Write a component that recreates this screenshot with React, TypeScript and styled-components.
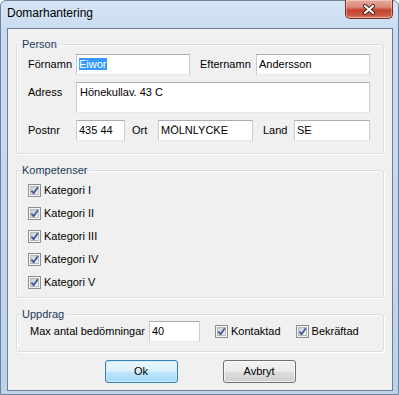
import type { FC, ReactNode } from 'react';
import styled, { createGlobalStyle } from 'styled-components';

const GlobalStyle = createGlobalStyle`
  html, body {
    margin: 0;
    padding: 0;
    background: #ffffff;
  }
  body {
    font-family: "Liberation Sans", Arial, sans-serif;
    font-size: 11px;
    color: #000;
  }
`;

const Window = styled.div`
  width: 399px;
  height: 395px;
  box-sizing: border-box;
  display: flex;
  flex-direction: column;
  padding: 0 5px 3px 6px;
  border: 1px solid #71839a;
  border-radius: 6px 6px 0 0;
  background: linear-gradient(180deg, #d7e6f6 0%, #c9dcf1 28px, #bdd3ec 100%);
`;

const TitleBar = styled.div`
  display: flex;
  align-items: flex-start;
  height: 27px;
  flex: none;
`;

const Title = styled.span`
  padding-top: 5px;
  font-size: 12px;
  line-height: 15px;
  color: #000;
`;

const CloseButton = styled.div`
  margin-left: auto;
  margin-top: -1px;
  width: 48px;
  height: 19px;
  box-sizing: border-box;
  display: flex;
  align-items: center;
  justify-content: center;
  border: 1px solid #7a2f25;
  border-top: none;
  border-radius: 0 0 5px 5px;
  background: linear-gradient(180deg, #e8a99c 0%, #d88a7a 40%, #c4432f 55%, #c95742 85%, #dc8a73 100%);
  box-shadow: inset 0 0 0 1px rgba(255, 255, 255, 0.35);
`;

const Client = styled.div`
  flex: 1;
  display: flex;
  flex-direction: column;
  padding: 15px 8px 0;
  border: 1px solid #6f7f90;
  background: #f0f0f0;
`;

const GroupBox = styled.div<{ $mt?: number }>`
  display: flex;
  flex-direction: column;
  margin-top: ${({ $mt }) => $mt ?? 0}px;
  border: 1px solid #d5dfe5;
  border-radius: 3px;
  box-shadow: inset 1px 1px 0 #ffffff, 1px 1px 0 #ffffff;
`;

const Caption = styled.span<{ $mb?: number }>`
  align-self: flex-start;
  margin: -8px 0 ${({ $mb }) => $mb ?? 0}px 3px;
  padding: 0 2px;
  line-height: 15px;
  background: #f0f0f0;
  color: #1e395b;
`;

const GroupBody = styled.div<{ $pad: string; $gap?: number }>`
  display: flex;
  flex-direction: column;
  gap: ${({ $gap }) => $gap ?? 0}px;
  padding: ${({ $pad }) => $pad};
`;

const FieldRow = styled.div<{ $top?: boolean }>`
  display: flex;
  align-items: ${({ $top }) => ($top ? 'flex-start' : 'center')};
`;

const FieldLabel = styled.span<{ $w: number; $pl?: number; $pt?: number }>`
  flex: none;
  box-sizing: border-box;
  width: ${({ $w }) => $w}px;
  padding-left: ${({ $pl }) => $pl ?? 0}px;
  padding-top: ${({ $pt }) => $pt ?? 0}px;
  line-height: 15px;
  white-space: nowrap;
`;

const TextBox = styled.div<{ $w?: number; $h?: number }>`
  box-sizing: border-box;
  ${({ $w }) => ($w ? `width: ${$w}px; flex: none;` : 'flex: 1;')}
  height: ${({ $h }) => $h ?? 21}px;
  padding: ${({ $h }) => ($h ? '2px 3px' : '0 2px')};
  border: 1px solid #c6ccd4;
  border-top-color: #abadb3;
  border-bottom-color: #e3e9ef;
  background: #ffffff;
  line-height: ${({ $h }) => ($h ? 15 : 19)}px;
  white-space: nowrap;
  overflow: hidden;
`;

const Selected = styled.span`
  background: #3399ff;
  color: #ffffff;
`;

const CheckRow = styled.label<{ $ml?: number; $h?: number }>`
  display: flex;
  align-items: center;
  gap: 3px;
  height: ${({ $h }) => ($h ? `${$h}px` : 'auto')};
  margin-left: ${({ $ml }) => $ml ?? 0}px;
  line-height: 15px;
  white-space: nowrap;
`;

const ButtonRow = styled.div`
  display: flex;
  justify-content: center;
  gap: 45px;
  margin-top: 8px;
`;

const Button = styled.div<{ $default?: boolean }>`
  box-sizing: border-box;
  width: 73px;
  height: 23px;
  display: flex;
  align-items: center;
  justify-content: center;
  border-radius: 3px;
  border: 1px solid ${({ $default }) => ($default ? '#3c7fb1' : '#707070')};
  background: ${({ $default }) =>
    $default
      ? 'linear-gradient(180deg, #eaf6fd 0%, #d9f0fc 50%, #bee6fd 50%, #a7d9f5 100%)'
      : 'linear-gradient(180deg, #f2f2f2 0%, #ebebeb 50%, #dddddd 50%, #cfcfcf 100%)'};
  box-shadow: inset 0 0 0 1px
    ${({ $default }) => ($default ? 'rgba(200, 235, 255, 0.9)' : 'rgba(255, 255, 255, 0.7)')};
  line-height: 15px;
`;

const CheckBox: FC = () => (
  <svg width="13" height="13" viewBox="0 0 13 13" style={{ flex: 'none' }}>
    <defs>
      <linearGradient id="cbInner" x1="0" y1="0" x2="1" y2="1">
        <stop offset="0" stopColor="#c9ccd1" />
        <stop offset="1" stopColor="#f5f5f5" />
      </linearGradient>
    </defs>
    <rect x="0.5" y="0.5" width="12" height="12" fill="#f4f4f4" stroke="#8e8f8f" />
    <rect x="2.5" y="2.5" width="8" height="8" fill="url(#cbInner)" stroke="#b6babf" />
    <path
      d="M3.4 6.6 L5.6 9.2 L9.8 3.2"
      fill="none"
      stroke="#3f5a98"
      strokeWidth="1.8"
      strokeLinejoin="round"
    />
  </svg>
);

const Check: FC<{ children: ReactNode; ml?: number; h?: number }> = ({ children, ml, h }) => (
  <CheckRow $ml={ml} $h={h}>
    <CheckBox />
    <span>{children}</span>
  </CheckRow>
);

const categories = ['Kategori I', 'Kategori II', 'Kategori III', 'Kategori IV', 'Kategori V'];

const App: FC = () => (
  <>
    <GlobalStyle />
    <Window>
      <TitleBar>
        <Title>Domarhantering</Title>
        <CloseButton>
          <svg width="14" height="11" viewBox="0 0 14 11">
            <path d="M3 2 L11 9 M11 2 L3 9" stroke="#4a1a14" strokeWidth="4" strokeLinecap="round" />
            <path d="M3 2 L11 9 M11 2 L3 9" stroke="#ffffff" strokeWidth="2.2" strokeLinecap="round" />
          </svg>
        </CloseButton>
      </TitleBar>
      <Client>
        <GroupBox>
          <Caption>Person</Caption>
          <GroupBody $pad="2px 13px 12px 11px" $gap={7}>
            <FieldRow>
              <FieldLabel $w={48}>Förnamn</FieldLabel>
              <TextBox $w={114}>
                <Selected>Eiwor</Selected>
              </TextBox>
              <FieldLabel $w={66} $pl={10}>
                Efternamn
              </FieldLabel>
              <TextBox>Andersson</TextBox>
            </FieldRow>
            <FieldRow $top>
              <FieldLabel $w={48} $pt={3}>
                Adress
              </FieldLabel>
              <TextBox $h={31}>Hönekullav. 43 C</TextBox>
            </FieldRow>
            <FieldRow>
              <FieldLabel $w={48}>Postnr</FieldLabel>
              <TextBox $w={49}>435 44</TextBox>
              <FieldLabel $w={33} $pl={7}>
                Ort
              </FieldLabel>
              <TextBox $w={95}>MÖLNLYCKE</TextBox>
              <FieldLabel $w={41} $pl={10}>
                Land
              </FieldLabel>
              <TextBox>SE</TextBox>
            </FieldRow>
          </GroupBody>
        </GroupBox>

        <GroupBox $mt={16}>
          <Caption>Kompetenser</Caption>
          <GroupBody $pad="1px 11px 3px">
            {categories.map((c) => (
              <Check key={c} h={23}>
                {c}
              </Check>
            ))}
          </GroupBody>
        </GroupBox>

        <GroupBox $mt={16}>
          <Caption $mb={-1}>Uppdrag</Caption>
          <GroupBody $pad="0 13px 9px 13px">
            <FieldRow>
              <FieldLabel $w={119}>Max antal bedömningar</FieldLabel>
              <TextBox $w={51}>40</TextBox>
              <Check ml={15}>Kontaktad</Check>
              <Check ml={15}>Bekräftad</Check>
            </FieldRow>
          </GroupBody>
        </GroupBox>

        <ButtonRow>
          <Button $default>Ok</Button>
          <Button>Avbryt</Button>
        </ButtonRow>
      </Client>
    </Window>
  </>
);

export default App;
